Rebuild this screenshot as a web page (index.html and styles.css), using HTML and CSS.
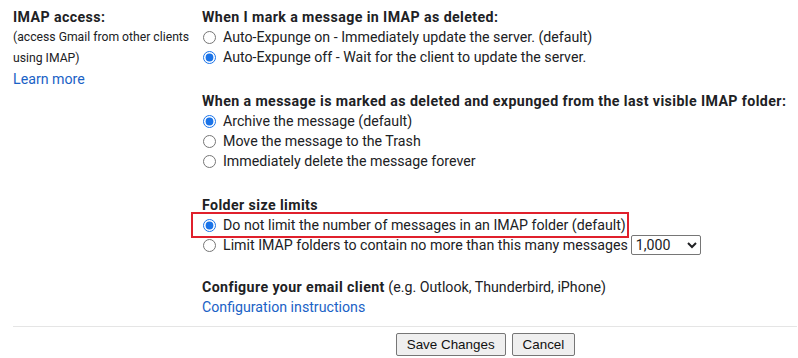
FILE: index.html
```html
<!DOCTYPE html>
<html lang="en">
<head>
    <meta charset="UTF-8">
    <title>IMAP access</title>
    <link rel="stylesheet" href="styles.css">
</head>
<body>
    <div class="settings">
        <div class="row">
            <div class="label">
                <div class="label-title">IMAP access:</div>
                <div class="label-note">(access Gmail from other clients using IMAP)</div>
                <a class="link" href="#">Learn more</a>
            </div>
            <div class="options">
                <div class="section">
                    <div class="section-title">When I mark a message in IMAP as deleted:</div>
                    <label class="opt"><input type="radio" name="expunge"> Auto-Expunge on - Immediately update the server. (default)</label>
                    <label class="opt"><input type="radio" name="expunge" checked> Auto-Expunge off - Wait for the client to update the server.</label>
                </div>

                <div class="section">
                    <div class="section-title">When a message is marked as deleted and expunged from the last visible IMAP folder:</div>
                    <label class="opt"><input type="radio" name="deleted" checked> Archive the message (default)</label>
                    <label class="opt"><input type="radio" name="deleted"> Move the message to the Trash</label>
                    <label class="opt"><input type="radio" name="deleted"> Immediately delete the message forever</label>
                </div>

                <div class="section folders">
                    <div class="section-title">Folder size limits</div>
                    <div class="highlight">
                        <label class="opt"><input type="radio" name="limit" checked> Do not limit the number of messages in an IMAP folder (default)</label>
                    </div>
                    <label class="opt"><input type="radio" name="limit"> Limit IMAP folders to contain no more than this many messages
                        <select class="count">
                            <option>1,000</option>
                            <option>2,000</option>
                            <option>5,000</option>
                            <option>10,000</option>
                        </select>
                    </label>
                </div>

                <div class="section last">
                    <div><span class="section-title">Configure your email client</span> (e.g. Outlook, Thunderbird, iPhone)</div>
                    <a class="link" href="#">Configuration instructions</a>
                </div>
            </div>
        </div>

        <div class="actions">
            <button>Save Changes</button>
            <button>Cancel</button>
        </div>
    </div>
</body>
</html>
```

FILE: styles.css
```css
* {
    margin: 0;
    padding: 0;
    box-sizing: border-box;
}

body {
    font-family: Roboto, Arial, sans-serif;
    font-size: 14.2px;
    color: #202124;
    background: white;
}

.settings {
    padding: 7px 1px 0 13px;
}

.row {
    display: flex;
}

.label {
    width: 189px;
    flex-shrink: 0;
}

.label-title {
    font-weight: bold;
    line-height: 20px;
    letter-spacing: 0.4px;
}

.label-note {
    font-size: 12.2px;
    line-height: 21px;
    padding-right: 10px;
}

.link {
    color: #1a62c6;
    text-decoration: none;
    line-height: 20px;
}

.options {
    flex: 1;
}

.section {
    margin-bottom: 24px;
    line-height: 20px;
}

.section.folders {
    margin-bottom: 22px;
}

.section.last {
    margin-bottom: 9px;
}

.section-title {
    font-weight: bold;
    letter-spacing: 0.4px;
}

.opt {
    display: flex;
    align-items: center;
    height: 20px;
    white-space: nowrap;
}

.opt input {
    width: 13px;
    height: 13px;
    margin: 0 7px 0 1px;
    accent-color: #1a73e8;
}

.highlight {
    border: 2px solid #e0202c;
    margin: -3px 0 -3px -11px;
    padding: 1px 1px 1px 9px;
    width: fit-content;
}

.count {
    margin-left: 3px;
    height: 20px;
    width: 70px;
    font-family: Roboto, Arial, sans-serif;
    font-size: 14.2px;
    border: 1px solid #767676;
    border-radius: 2px;
    background: white;
    color: #202124;
}

.actions {
    border-top: 1px solid #e5e5e5;
    padding-top: 6px;
    display: flex;
    justify-content: center;
    gap: 6px;
    padding-left: 161px;
}

.actions button {
    font-family: "Liberation Sans", Arial, sans-serif;
    font-size: 13.4px;
    padding: 1px 10px;
    height: 23px;
    border: 1px solid #767676;
    border-radius: 2px;
    background: #efefef;
    color: #111;
}
```
